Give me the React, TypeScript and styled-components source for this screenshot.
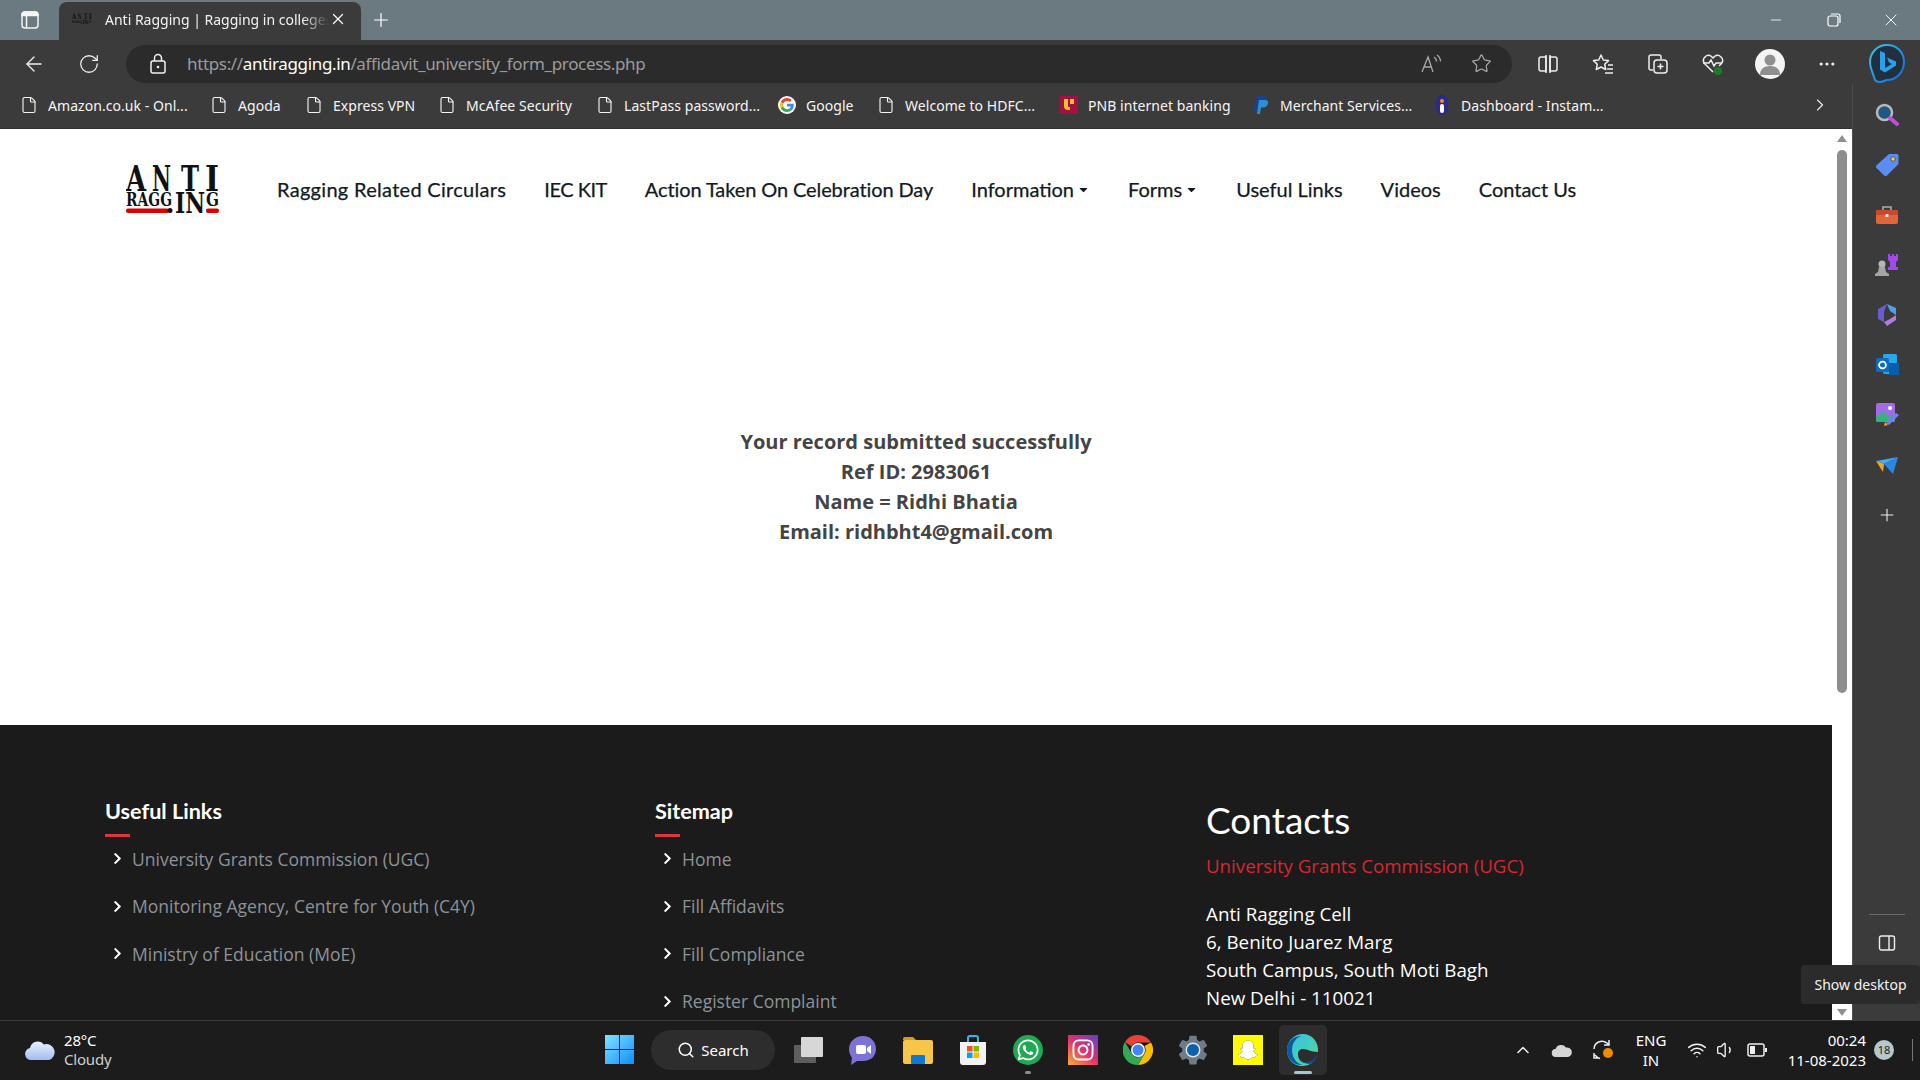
import React from 'react'
import styled, { createGlobalStyle } from 'styled-components'
import {
  ArrowLeft,
  ChevronRight,
  ChevronUp,
  File,
  Minus,
  MoreHorizontal,
  Plus,
  RotateCw,
  Search,
  Star,
  Volume1,
  Wifi,
  X,
} from 'lucide-react'
import { FaSnapchatGhost, FaWhatsapp, FaInstagram, FaCaretDown, FaChevronRight } from 'react-icons/fa'
import { IoSettingsSharp } from 'react-icons/io5'

const GlobalStyle = createGlobalStyle`
  html, body {
    margin: 0;
    padding: 0;
    height: 100%;
    overflow: hidden;
    background: #3b3b3b;
  }
  * {
    box-sizing: border-box;
  }
`

const Screen = styled.div`
  position: relative;
  width: 1920px;
  height: 1080px;
  display: flex;
  flex-direction: column;
  overflow: hidden;
  font-family: 'Open Sans', sans-serif;
`

/* ---- browser chrome ---- */

const TabStrip = styled.div`
  height: 40px;
  flex: none;
  display: flex;
  align-items: flex-end;
  background: #6b7a80;
  color: #fff;
`

const TabPanelButton = styled.div`
  width: 59px;
  height: 40px;
  display: flex;
  align-items: center;
  justify-content: center;
`

const Tab = styled.div`
  width: 302px;
  height: 38px;
  display: flex;
  align-items: center;
  padding: 0 13px 4px 13px;
  background: #3b3b3b;
  border-radius: 8px 8px 0 0;
`

const TabTitle = styled.div`
  margin-left: 13px;
  width: 224px;
  overflow: hidden;
  white-space: nowrap;
  font-size: 14px;
  font-family: 'Noto Sans', sans-serif;
  color: #f2f2f2;
  mask-image: linear-gradient(to right, #000 88%, transparent 100%);
`

const NewTab = styled.div`
  margin-left: 6px;
  width: 28px;
  height: 40px;
  display: flex;
  align-items: center;
  justify-content: center;
`

const WindowControls = styled.div`
  margin-left: auto;
  height: 40px;
  display: flex;
  align-items: center;
`

const WindowButton = styled.div`
  width: 57.5px;
  height: 40px;
  display: flex;
  align-items: center;
  justify-content: center;
`

const Toolbar = styled.div`
  height: 44px;
  flex: none;
  display: flex;
  align-items: center;
  gap: 11px;
  padding: 3px 0 0 12px;
  background: #3b3b3b;
`

const ToolButton = styled.div<{ $dim?: boolean; $nudge?: number }>`
  width: 44px;
  height: 38px;
  flex: none;
  display: flex;
  align-items: center;
  justify-content: center;
  margin-left: ${({ $nudge }) => $nudge ?? 0}px;
  color: ${({ $dim }) => ($dim ? '#a8a8a8' : '#eeeeee')};
`

const Omnibox = styled.div`
  width: 1386px;
  height: 38px;
  flex: none;
  margin: 0 3px 0 4px;
  display: flex;
  align-items: center;
  background: #2b2b2b;
  border-radius: 19px;
  padding-left: 23px;
  color: #f0f0f0;
`

const Url = styled.div`
  margin-left: 20px;
  font-size: 17px;
  font-family: 'Noto Sans', sans-serif;
  color: #9b9b9b;
  flex: 1;
  white-space: nowrap;
  letter-spacing: -0.35px;
  b {
    font-weight: 400;
    color: #fff;
  }
`

const OmniboxActions = styled.div`
  display: flex;
  align-items: center;
  gap: 6px;
  padding-right: 9px;
`

const Avatar = styled.div`
  width: 30px;
  height: 30px;
  border-radius: 50%;
  background: #f4f4f4;
  display: flex;
  align-items: center;
  justify-content: center;
  overflow: hidden;
`

const Body = styled.div`
  flex: 1;
  min-height: 0;
  display: flex;
`

const Content = styled.div`
  width: 1852px;
  flex: none;
  display: flex;
  flex-direction: column;
`

const Bookmarks = styled.div`
  height: 45px;
  flex: none;
  display: flex;
  align-items: center;
  padding: 0 20px 2px;
  background: #3b3b3b;
  border-bottom: 1px solid #2f2f2f;
  color: #f5f5f5;
`

const Bookmark = styled.div<{ $width: number }>`
  width: ${({ $width }) => $width}px;
  flex: none;
  display: flex;
  align-items: center;
  gap: 10px;
`

const BookmarkIcon = styled.span`
  width: 18px;
  height: 20px;
  flex: none;
  display: flex;
  align-items: center;
  justify-content: center;
`

const BookmarkLabel = styled.span`
  font-size: 14px;
  font-family: 'Noto Sans', sans-serif;
  white-space: nowrap;
  letter-spacing: 0.05px;
`

const BookmarkMore = styled.div`
  margin-left: auto;
  width: 24px;
  display: flex;
  justify-content: center;
  color: #e8e8e8;
`

const PageRow = styled.div`
  flex: 1;
  min-height: 0;
  display: flex;
`

const Page = styled.div`
  width: 1832px;
  flex: none;
  display: flex;
  flex-direction: column;
  background: #fff;
  overflow: hidden;
`

const ScrollTrack = styled.div`
  width: 20px;
  flex: none;
  background: #fff;
  display: flex;
  flex-direction: column;
  align-items: center;
  padding-top: 6px;
`

const ScrollThumb = styled.div`
  width: 10px;
  height: 543px;
  margin-top: 8px;
  border-radius: 5px;
  background: #8e8e8e;
`

const ScrollArrow = styled.div<{ $down?: boolean }>`
  width: 0;
  height: 0;
  border-left: 5px solid transparent;
  border-right: 5px solid transparent;
  ${({ $down }) =>
    $down
      ? 'border-top: 7px solid #8f8f8f; margin-top: auto; margin-bottom: 4px;'
      : 'border-bottom: 7px solid #8f8f8f;'}
`

const Sidebar = styled.div`
  width: 68px;
  flex: none;
  display: flex;
  flex-direction: column;
  align-items: center;
  padding-top: 6px;
  background: #3b3b3b;
  border-left: 1px solid #4d4d4d;
  color: #eee;
`

const SideButton = styled.div`
  width: 40px;
  height: 50px;
  flex: none;
  display: flex;
  align-items: center;
  justify-content: center;
  &:last-of-type {
    margin-top: 5px;
  }
`

const SideDivider = styled.div`
  width: 36px;
  height: 1px;
  margin-top: auto;
  background: #6a6a6a;
`

const SideFoot = styled.div`
  height: 105px;
  flex: none;
  padding-top: 19px;
  display: flex;
  justify-content: center;
  color: #eee;
`

/* ---- web page ---- */

const NavBar = styled.nav`
  height: 120px;
  flex: none;
  display: flex;
  align-items: center;
  padding-left: 126px;
`

const NavLinks = styled.div`
  margin-left: 57px;
  display: flex;
  align-items: center;
  gap: 38px;
`

const NavLink = styled.a<{ $tracking?: number }>`
  display: flex;
  align-items: center;
  gap: 3px;
  font-family: 'Lato', sans-serif;
  font-size: 20px;
  letter-spacing: ${({ $tracking }) => $tracking ?? 0}px;
  -webkit-text-stroke: 0.25px #111a22;
  color: #111a22;
  white-space: nowrap;
`

const Message = styled.main`
  height: 476px;
  flex: none;
  padding-top: 178px;
  text-align: center;
  font-size: 20px;
  font-weight: 700;
  line-height: 30px;
  color: #444444;
`

const Footer = styled.footer`
  flex: 1;
  min-height: 0;
  display: grid;
  grid-template-columns: 550px 551px 1fr;
  padding: 69px 0 0 105px;
  background: #1b1b1b;
  overflow: hidden;
`

const FooterTitle = styled.h4`
  margin: 0;
  position: relative;
  font-family: 'Lato', sans-serif;
  font-size: 21.6px;
  font-weight: 700;
  line-height: 34px;
  height: 43px;
  color: #fff;
  &::after {
    content: '';
    position: absolute;
    left: 0;
    bottom: 0;
    width: 25px;
    height: 3px;
    background: #dc3540;
  }
`

const LinkList = styled.ul`
  list-style: none;
  margin: -2px 0 0;
  padding: 0;
`

const LinkItem = styled.li`
  height: 47.5px;
  display: flex;
  align-items: center;
  gap: 8px;
  padding-left: 6px;
  font-size: 17.5px;
  color: #8d9399;
  white-space: nowrap;
  svg {
    color: #fff;
  }
`

const ContactsTitle = styled.h3`
  margin: 1px 0 0;
  height: 50px;
  font-family: 'Lato', sans-serif;
  font-size: 37px;
  font-weight: 400;
  line-height: 50px;
  color: #fff;
`

const ContactOrg = styled.div`
  margin-top: 7px;
  font-size: 18.7px;
  line-height: 28px;
  color: #d8262f;
  white-space: nowrap;
`

const ContactAddress = styled.address`
  margin-top: 20px;
  font-style: normal;
  font-size: 18.8px;
  line-height: 28px;
  color: #fff;
  white-space: nowrap;
`

/* ---- taskbar ---- */

const Taskbar = styled.div`
  height: 60px;
  flex: none;
  display: flex;
  align-items: center;
  padding-bottom: 2px;
  background: #1c1c1c;
  border-top: 1px solid #3a3a3a;
  color: #fff;
`

const Weather = styled.div`
  width: 605px;
  flex: none;
  display: flex;
  align-items: center;
  gap: 8px;
  padding-left: 24px;
`

const WeatherText = styled.div`
  font-size: 15px;
  line-height: 19px;
  font-family: 'Noto Sans', sans-serif;
  letter-spacing: -0.2px;
  span {
    display: block;
    color: #cfcfcf;
  }
`

const TaskIcons = styled.div`
  display: flex;
  align-items: center;
`

const TaskIcon = styled.div<{ $active?: boolean; $pip?: boolean }>`
  position: relative;
  width: 48px;
  height: 50px;
  margin: 0 3.5px;
  flex: none;
  display: flex;
  align-items: center;
  justify-content: center;
  border-radius: 5px;
  background: ${({ $active }) => ($active ? '#2d2d2d' : 'transparent')};
  &::after {
    content: '';
    display: ${({ $active, $pip }) => ($active || $pip ? 'block' : 'none')};
    position: absolute;
    bottom: 1px;
    left: 50%;
    transform: translateX(-50%);
    width: ${({ $active }) => ($active ? '18px' : '6px')};
    height: 3px;
    border-radius: 2px;
    background: ${({ $active }) => ($active ? '#a9c4cf' : '#8c8c8c')};
  }
`

const SearchPill = styled.div`
  width: 124px;
  height: 40px;
  margin: 0 5px 0 17px;
  flex: none;
  display: flex;
  align-items: center;
  justify-content: center;
  gap: 6px;
  border-radius: 20px;
  background: #2d2d2d;
  font-size: 15px;
  font-family: 'Noto Sans', sans-serif;
`

const Tray = styled.div`
  margin-left: auto;
  display: flex;
  align-items: center;
  padding-right: 7px;
`

const TrayIcon = styled.div<{ $width: number }>`
  width: ${({ $width }) => $width}px;
  height: 40px;
  flex: none;
  display: flex;
  align-items: center;
  justify-content: center;
  color: #f2f2f2;
`

const TrayLang = styled.div`
  width: 64px;
  flex: none;
  text-align: center;
  font-size: 15px;
  line-height: 20px;
  font-family: 'Noto Sans', sans-serif;
`

const Clock = styled.div`
  width: 93px;
  flex: none;
  text-align: right;
  font-size: 15px;
  line-height: 20px;
  font-family: 'Noto Sans', sans-serif;
`

const CountBadge = styled.div`
  width: 20px;
  height: 20px;
  margin: 0 18px 0 8px;
  flex: none;
  display: flex;
  align-items: center;
  justify-content: center;
  border-radius: 50%;
  background: #b5c6cc;
  color: #1c1c1c;
  font-size: 11px;
  font-family: 'Noto Sans', sans-serif;
`

const DesktopEdge = styled.div`
  width: 1px;
  height: 22px;
  background: #777;
`

const Tooltip = styled.div`
  position: absolute;
  left: 1801px;
  top: 965px;
  width: 119px;
  height: 39px;
  display: flex;
  align-items: center;
  justify-content: center;
  border-radius: 4px;
  background: #2b2b2b;
  color: #f2f2f2;
  font-size: 14px;
  font-family: 'Noto Sans', sans-serif;
  white-space: nowrap;
`

/* ---- drawings ---- */

const logoLetters = [
  { char: 'A', x: 0, w: 20 },
  { char: 'N', x: 26, w: 19 },
  { char: 'T', x: 55, w: 18 },
  { char: 'I', x: 79, w: 14 },
]

const Logo: React.FC<{ width?: number; height?: number }> = ({ width = 94, height = 52 }) => (
  <svg width={width} height={height} viewBox="0 0 94 52">
    <g fontFamily="'DejaVu Serif', serif" fontWeight="700" fill="#111">
      {logoLetters.map((letter) => (
        <text
          key={letter.char}
          x={letter.x}
          y="28"
          fontSize="36"
          textLength={letter.w}
          lengthAdjust="spacingAndGlyphs"
        >
          {letter.char}
        </text>
      ))}
      <text x="0" y="43" fontSize="18" textLength="46" lengthAdjust="spacingAndGlyphs">
        RAGG
      </text>
      <text x="49" y="50" fontSize="27" textLength="30" lengthAdjust="spacingAndGlyphs">
        IN
      </text>
      <text x="80" y="43" fontSize="18" textLength="13" lengthAdjust="spacingAndGlyphs">
        G
      </text>
    </g>
    <rect x="0" y="45.500" width="43" height="4.500" rx="2" fill="#d90000" />
    <circle cx="44" cy="47.500" r="2.500" fill="#111" />
    <rect x="80" y="45.500" width="13" height="4.500" rx="2" fill="#d90000" />
  </svg>
)

const VerticalTabsIcon = () => (
  <svg width="20" height="20" viewBox="0 0 20 20" fill="none" stroke="#f4f4f4" strokeWidth="1.500">
    <rect x="2" y="2" width="16" height="16" rx="3" />
    <path d="M2 5.500a3 3 0 0 1 3-3.500h10a3 3 0 0 1 3 3.500z" fill="#f4f4f4" />
    <path d="M6.500 5v13" />
  </svg>
)

const LockDot = () => (
  <svg width="18" height="22" viewBox="0 0 18 22" fill="none" stroke="#f0f0f0" strokeWidth="1.500">
    <rect x="2" y="8" width="14" height="12" rx="2" />
    <path d="M5.500 8V5a3.500 3.500 0 0 1 7 0v3" />
    <circle cx="9" cy="14" r="1.300" fill="#f0f0f0" stroke="none" />
  </svg>
)

const SplitIcon = () => (
  <svg width="22" height="24" viewBox="0 0 22 24" fill="none" stroke="#eee" strokeWidth="1.500">
    <path d="M9 5H4a2 2 0 0 0-2 2v10a2 2 0 0 0 2 2h5zM13 5h5a2 2 0 0 1 2 2v10a2 2 0 0 1-2 2h-5z" />
    <path d="M9 3v18M13 3v18" />
  </svg>
)

const GoogleIcon = () => (
  <svg width="20" height="20" viewBox="0 0 48 48">
    <circle cx="24" cy="24" r="24" fill="#fff" />
    <path fill="#EA4335" d="M24 13c3 0 5.400 1 7.300 2.800l5.300-5.300C33.300 7.500 29 5.500 24 5.500 16.800 5.500 10.600 9.600 7.600 15.600l6.200 4.800C15.200 16.100 19.200 13 24 13z" />
    <path fill="#4285F4" d="M42 24.500c0-1.300-.1-2.500-.3-3.700H24v7.100h10.100c-.4 2.300-1.800 4.300-3.800 5.600l6 4.600c3.500-3.200 5.700-8 5.700-13.600z" />
    <path fill="#FBBC05" d="M13.800 27.600c-.4-1.100-.6-2.300-.6-3.600s.2-2.500.6-3.600l-6.200-4.800C6.300 18.100 5.500 21 5.500 24s.8 5.900 2.100 8.400l6.200-4.800z" />
    <path fill="#34A853" d="M24 42.500c5 0 9.200-1.600 12.300-4.500l-6-4.600c-1.700 1.100-3.800 1.800-6.300 1.800-4.800 0-8.800-3.100-10.200-7.600l-6.200 4.800c3 6 9.200 10.100 16.400 10.100z" />
  </svg>
)

const PnbIcon = () => (
  <svg width="18" height="18" viewBox="0 0 18 18">
    <rect width="18" height="18" fill="#a3123f" />
    <path d="M4 3v7a4 4 0 0 0 4 4h2v-3H9a1 1 0 0 1-1-1V3zM10 3v5h4V3z" fill="#f7c02c" />
  </svg>
)

const PaypalIcon = () => (
  <svg width="16" height="20" viewBox="0 0 16 20">
    <path d="M4 1h6c3 0 4.500 1.600 4 4.200C13.400 8.400 11 10 8 10H6l-1 6H1z" fill="#1b3f94" />
    <path d="M6 5h6c2.500 0 3.500 1.400 3 3.500-.6 2.600-2.600 4-5 4H8l-1 6.500H4z" fill="#2a9ad8" opacity="0.9" />
  </svg>
)

const InstamojoIcon = () => (
  <svg width="14" height="20" viewBox="0 0 14 20">
    <ellipse cx="7" cy="10" rx="6.500" ry="10" fill="#2b2a8c" />
    <circle cx="7" cy="6" r="2" fill="#f28c28" />
    <rect x="5" y="9" width="4" height="9" rx="2" fill="#fff" />
  </svg>
)

const ReadAloud = () => (
  <svg width="22" height="22" viewBox="0 0 22 22" fill="none" stroke="#a8a8a8" strokeWidth="1.300">
    <path d="M2 19 8 4l5 15M4.500 14h7" />
    <path d="M14 4c1.500 1 2.500 2.500 2.500 4.500M17 2c2 1.500 3.500 4 3.500 6.500" />
  </svg>
)

const FavoritesIcon = () => (
  <svg width="24" height="24" viewBox="0 0 24 24" fill="none" stroke="#eee" strokeWidth="1.500" strokeLinejoin="round">
    <path d="M10 3l2.300 5 5.200.6-3.800 3.600 1 5.300L10 15l-4.700 2.500 1-5.300L2.500 8.600 7.700 8z" />
    <path d="M17 13h5M16 17h6M14 21h8" />
  </svg>
)

const CollectionsIcon = () => (
  <svg width="24" height="24" viewBox="0 0 24 24" fill="none" stroke="#eee" strokeWidth="1.500">
    <path d="M7 18H5a2 2 0 0 1-2-2V5a2 2 0 0 1 2-2h8a2 2 0 0 1 2 2v2" />
    <rect x="8" y="8" width="13" height="13" rx="3" />
    <path d="M14.500 11.500v6M11.500 14.500h6" />
  </svg>
)

const HealthIcon = () => (
  <svg width="26" height="26" viewBox="0 0 26 26">
    <path
      d="M13 21 4.500 12.500a5 5 0 0 1 7-7L13 7l1.500-1.500a5 5 0 0 1 7 7L19 15"
      fill="none"
      stroke="#eee"
      strokeWidth="1.500"
    />
    <path d="M3 12h6l2-3 3 6 2-3h6" fill="none" stroke="#eee" strokeWidth="1.500" />
    <circle cx="18" cy="20" r="4" fill="#1c7a2a" />
  </svg>
)

const AvatarFigure = () => (
  <svg width="30" height="30" viewBox="0 0 30 30">
    <circle cx="15" cy="11" r="5.500" fill="#8f8f8f" />
    <path d="M5 26c0-6 4-9 10-9s10 3 10 9z" fill="#8f8f8f" />
  </svg>
)

const BingIcon = () => (
  <svg width="38" height="42" viewBox="0 0 38 42">
    <defs>
      <linearGradient id="bingRing" x1="0" y1="0" x2="1" y2="1">
        <stop offset="0" stopColor="#37c8f0" />
        <stop offset="1" stopColor="#1463d8" />
      </linearGradient>
    </defs>
    <path
      d="M19 2C9.500 2 2 9.500 2 19c0 6 3 11 4 15 .5 3 3 5 6 5 4 0 5-2 7-2 9.500 0 17-8 17-18S28.500 2 19 2z"
      fill="#20303c"
      stroke="url(#bingRing)"
      strokeWidth="2"
    />
    <path d="M12 8l5 2v15l7-4-3-1.500-2-5 9 4v4l-11 7-5-3z" fill="#2b9ff0" />
  </svg>
)

const SearchGlass = () => (
  <svg width="24" height="24" viewBox="0 0 24 24">
    <circle cx="9.500" cy="9.500" r="7.500" fill="#20567f" stroke="#b9b9b9" strokeWidth="2.500" />
    <path d="M15 15l7 6" stroke="#c24ddb" strokeWidth="4" strokeLinecap="round" />
  </svg>
)

const TagIcon = () => (
  <svg width="24" height="24" viewBox="0 0 24 24">
    <path d="M14 1h8a1.500 1.500 0 0 1 1.500 1.500V11L12 22.500a2 2 0 0 1-2.800 0L1.500 15a2 2 0 0 1 0-2.800z" fill="#5b8cf5" />
    <circle cx="18" cy="6" r="2.200" fill="#f4d03f" stroke="#333" strokeWidth="0.700" />
  </svg>
)

const ToolboxIcon = () => (
  <svg width="24" height="24" viewBox="0 0 24 24">
    <path d="M8 7V4h8v3" fill="none" stroke="#aaa" strokeWidth="1.600" />
    <rect x="1" y="7" width="22" height="14" rx="2" fill="#e2643a" />
    <rect x="1" y="7" width="22" height="5" fill="#c7482a" />
    <rect x="10.500" y="11" width="3" height="3" fill="#ddd" />
  </svg>
)

const ChessIcon = () => (
  <svg width="24" height="24" viewBox="0 0 24 24">
    <path d="M13 1h2v2h2V1h2v2h2V1h2v6l-2 2v5h2v3H13v-3h2V9l-2-2z" fill="#a04be8" />
    <circle cx="7" cy="11" r="3.500" fill="#b5b5b5" />
    <path d="M4 14h6l1 5 3 2v2H0v-2l3-2z" fill="#a5a5a5" />
  </svg>
)

const CopilotIcon = () => (
  <svg width="24" height="24" viewBox="0 0 24 24">
    <path d="M12 1 21 5v7l-6-4-3-7z" fill="#4aa3e8" />
    <path d="M3 6l9-5-3 8v10L3 16z" fill="#6a5bd0" />
    <path d="M9 19l6-3 6-4v5l-9 6z" fill="#b07ce0" />
  </svg>
)

const OutlookIcon = () => (
  <svg width="24" height="24" viewBox="0 0 24 24">
    <rect x="8" y="1" width="14" height="20" rx="1.500" fill="#28a8ea" />
    <rect x="14" y="10" width="10" height="12" fill="#0a5ea8" />
    <rect x="1" y="5" width="13" height="14" rx="1.500" fill="#0f6cbd" />
    <circle cx="7.500" cy="12" r="3.400" fill="none" stroke="#fff" strokeWidth="1.800" />
  </svg>
)

const ImageIcon = () => (
  <svg width="26" height="26" viewBox="0 0 26 26">
    <rect x="2" y="1" width="19" height="19" rx="2" fill="#a36be8" />
    <path d="M2 15l7-6 6 6 6-3v6a2 2 0 0 1-2 2H4a2 2 0 0 1-2-2z" fill="#35b37e" />
    <circle cx="16" cy="6" r="2" fill="#fff" />
    <path d="M12 21l10-10 3 2-10 10z" fill="#7e7bf0" />
    <path d="M11 20l3 3-4 1z" fill="#f2a81d" />
  </svg>
)

const SendIcon = () => (
  <svg width="24" height="22" viewBox="0 0 24 22">
    <path d="M1 7l22-4-14 7z" fill="#43a8f5" />
    <path d="M23 3 18 20l-9-10z" fill="#2b87e3" />
    <path d="M1 7l8 3-1 8z" fill="#f4a71e" />
  </svg>
)

const PanelRight = () => (
  <svg width="18" height="18" viewBox="0 0 18 18" fill="none" stroke="#eee" strokeWidth="1.400">
    <rect x="1.500" y="2" width="15" height="14" rx="2" />
    <path d="M11 2v14" />
  </svg>
)

const CloudIcon = () => (
  <svg width="32" height="24" viewBox="0 0 32 24">
    <defs>
      <linearGradient id="cloudFill" x1="0" y1="0" x2="0" y2="1">
        <stop offset="0" stopColor="#e8f0ff" />
        <stop offset="1" stopColor="#a3bdf0" />
      </linearGradient>
    </defs>
    <path d="M7 22a6 6 0 0 1-1-11.900A8 8 0 0 1 20 6.500 6.500 6.500 0 0 1 25 22z" fill="url(#cloudFill)" />
  </svg>
)

const WindowsLogo = () => (
  <svg width="29" height="29" viewBox="0 0 29 29">
    <defs>
      <linearGradient id="winFill" x1="0" y1="0" x2="1" y2="1">
        <stop offset="0" stopColor="#7fe3ff" />
        <stop offset="1" stopColor="#0f8fff" />
      </linearGradient>
    </defs>
    <path d="M0 0h14v14H0zM15 0h14v14H15zM0 15h14v14H0zM15 15h14v14H15z" fill="url(#winFill)" />
  </svg>
)

const TaskViewIcon = () => (
  <svg width="30" height="28" viewBox="0 0 30 28">
    <rect x="1" y="9" width="22" height="18" rx="1" fill="#5e5e5e" />
    <rect x="8" y="1" width="22" height="20" rx="1" fill="#d7d7d7" />
  </svg>
)

const TeamsIcon = () => (
  <svg width="30" height="30" viewBox="0 0 30 30">
    <path d="M15 1c8 0 13 6 13 13s-5 12-13 12H9l-6 4 1-7C2 20 1 17 1 14 1 7 7 1 15 1z" fill="#7b74d6" />
    <rect x="8" y="10" width="10" height="9" rx="2" fill="#fff" />
    <path d="M19 13l4-3v9l-4-3z" fill="#fff" />
  </svg>
)

const FolderIcon = () => (
  <svg width="30" height="28" viewBox="0 0 30 28">
    <path d="M0 3a2 2 0 0 1 2-2h8l3 3h-13z" fill="#d99a1c" />
    <rect x="0" y="4" width="30" height="24" rx="2" fill="#f7c548" />
    <rect x="8" y="19" width="14" height="9" rx="1" fill="#0f78d4" />
  </svg>
)

const StoreIcon = () => (
  <svg width="28" height="30" viewBox="0 0 28 30">
    <path d="M9 7V3a2 2 0 0 1 2-2h6a2 2 0 0 1 2 2v4" fill="none" stroke="#35b6e8" strokeWidth="2" />
    <path d="M1 7h26v20a3 3 0 0 1-3 3H4a3 3 0 0 1-3-3z" fill="#f2f2f2" />
    <rect x="8" y="11" width="5.500" height="5.500" fill="#f25022" />
    <rect x="14.500" y="11" width="5.500" height="5.500" fill="#7fba00" />
    <rect x="8" y="17.500" width="5.500" height="5.500" fill="#00a4ef" />
    <rect x="14.500" y="17.500" width="5.500" height="5.500" fill="#ffb900" />
  </svg>
)

const ChromeIcon = () => (
  <svg width="30" height="30" viewBox="0 0 30 30">
    <path d="M15 0a15 15 0 0 1 13 7.500H15a7.500 7.500 0 0 0-6.500 3.750L2 7A15 15 0 0 1 15 0z" fill="#ea4335" />
    <path d="M28 7.500A15 15 0 0 1 15 30l6.500-11.250A7.500 7.500 0 0 0 21.500 11z" fill="#fbbc05" />
    <path d="M15 30A15 15 0 0 1 2 7l6.500 11.250A7.500 7.500 0 0 0 15 22.500l6.500-3.750z" fill="#34a853" />
    <circle cx="15" cy="15" r="7" fill="#fff" />
    <circle cx="15" cy="15" r="5.500" fill="#4285f4" />
  </svg>
)

const SnapTile = styled.div`
  width: 30px;
  height: 30px;
  display: flex;
  align-items: center;
  justify-content: center;
  background: #fffc00;
  color: #fff;
  svg {
    filter: drop-shadow(0 0 0.7px #000);
  }
`

const InstaTile = styled.div`
  width: 30px;
  height: 30px;
  display: flex;
  align-items: center;
  justify-content: center;
  color: #fff;
  background: linear-gradient(40deg, #f9a13a 5%, #e1306c 50%, #6a3fc8 95%);
`

const WhatsappTile = styled.div`
  width: 30px;
  height: 30px;
  display: flex;
  align-items: center;
  justify-content: center;
  border-radius: 50%;
  background: #1ea952;
  color: #fff;
`

const SettingsTile = styled.div`
  position: relative;
  display: flex;
  color: #6f7b85;
  &::after {
    content: '';
    position: absolute;
    inset: 10px;
    border-radius: 50%;
    background: #0c5fa8;
    box-shadow: 0 0 0 1.5px #dfe6ea;
  }
`

const EdgeIcon = () => (
  <svg width="32" height="32" viewBox="0 0 32 32">
    <defs>
      <linearGradient id="edgeTop" x1="0" y1="0" x2="1" y2="1">
        <stop offset="0" stopColor="#35c1f1" />
        <stop offset="1" stopColor="#54d88a" />
      </linearGradient>
    </defs>
    <path d="M16 0C7 0 0 7 0 16c0 9 6 16 15 16 4 0 7-1 10-3-8 2-14-2-14-9 0-3 2-5 5-5 5 0 7 3 15 3C32 8 25 0 16 0z" fill="url(#edgeTop)" />
    <path d="M0 16C0 7 7 2 14 2 9 4 5 9 5 16c0 8 5 14 11 15C7 32 0 25 0 16z" fill="#0c59a4" />
    <path d="M31 19c-2 5-7 9-12 9-4 0-8-4-8-8 0 7 6 11 14 9 3-2 5-6 6-10z" fill="#114a8b" />
  </svg>
)

const SyncIcon = () => (
  <svg width="26" height="26" viewBox="0 0 26 26">
    <path d="M4 12a8 8 0 0 1 13-6l2 2M19 3v5h-5" fill="none" stroke="#eee" strokeWidth="1.500" />
    <path d="M4 16v5h5M5 18l2 2a8 8 0 0 0 3 1.500" fill="none" stroke="#eee" strokeWidth="1.500" />
    <circle cx="18" cy="16" r="5" fill="#f08a00" />
  </svg>
)

const TrayCloud = () => (
  <svg width="22" height="16" viewBox="0 0 22 16">
    <path d="M5 15a4 4 0 0 1-.5-8A6 6 0 0 1 15 5.500 4.800 4.800 0 0 1 17 15z" fill="#d6d6d6" />
  </svg>
)

const BatteryIcon = () => (
  <svg width="20" height="14" viewBox="0 0 20 14">
    <rect x="1" y="1" width="16" height="12" rx="2" fill="none" stroke="#eee" strokeWidth="1.500" />
    <rect x="3" y="3" width="5" height="8" fill="#eee" />
    <rect x="18" y="5" width="2" height="4" fill="#eee" />
  </svg>
)

const PageIcon = () => <File size={20} strokeWidth={1.5} />

const bookmarks = [
  { label: 'Amazon.co.uk - Onl...', width: 190, icon: <PageIcon /> },
  { label: 'Agoda', width: 95, icon: <PageIcon /> },
  { label: 'Express VPN', width: 133, icon: <PageIcon /> },
  { label: 'McAfee Security', width: 158, icon: <PageIcon /> },
  { label: 'LastPass password...', width: 182, icon: <PageIcon /> },
  { label: 'Google', width: 99, icon: <GoogleIcon /> },
  { label: 'Welcome to HDFC...', width: 183, icon: <PageIcon /> },
  { label: 'PNB internet banking', width: 192, icon: <PnbIcon /> },
  { label: 'Merchant Services...', width: 181, icon: <PaypalIcon /> },
  { label: 'Dashboard - Instam...', width: 170, icon: <InstamojoIcon /> },
]

const usefulLinks = [
  'University Grants Commission (UGC)',
  'Monitoring Agency, Centre for Youth (C4Y)',
  'Ministry of Education (MoE)',
]

const sitemap = ['Home', 'Fill Affidavits', 'Fill Compliance', 'Register Complaint']

const sideTools = [
  <SearchGlass key="search" />,
  <TagIcon key="tag" />,
  <ToolboxIcon key="tools" />,
  <ChessIcon key="games" />,
  <CopilotIcon key="m365" />,
  <OutlookIcon key="outlook" />,
  <ImageIcon key="image" />,
  <SendIcon key="send" />,
  <Plus key="add" size={20} strokeWidth={1.3} />,
]

const App: React.FC = () => {
  return (
    <Screen>
      <GlobalStyle />
      <TabStrip>
        <TabPanelButton>
          <VerticalTabsIcon />
        </TabPanelButton>
        <Tab>
          <Logo width={20} height={20} />
          <TabTitle>Anti Ragging | Ragging in colleges</TabTitle>
          <X size={18} strokeWidth={1.6} />
        </Tab>
        <NewTab>
          <Plus size={22} strokeWidth={1.3} />
        </NewTab>
        <WindowControls>
          <WindowButton>
            <Minus size={16} strokeWidth={1.2} />
          </WindowButton>
          <WindowButton>
            <svg width="14" height="14" viewBox="0 0 14 14" fill="none" stroke="#fff" strokeWidth="1.200">
              <rect x="1" y="3" width="10" height="10" rx="2" />
              <path d="M4 1h7a2 2 0 0 1 2 2v7" />
            </svg>
          </WindowButton>
          <WindowButton>
            <X size={20} strokeWidth={1.1} />
          </WindowButton>
        </WindowControls>
      </TabStrip>

      <Toolbar>
        <ToolButton>
          <ArrowLeft size={24} strokeWidth={1.4} />
        </ToolButton>
        <ToolButton>
          <RotateCw size={22} strokeWidth={1.4} />
        </ToolButton>
        <Omnibox>
          <LockDot />
          <Url>
            https://<b>antiragging.in</b>/affidavit_university_form_process.php
          </Url>
          <OmniboxActions>
            <ToolButton $dim>
              <ReadAloud />
            </ToolButton>
            <ToolButton $dim>
              <Star size={21} strokeWidth={1.4} />
            </ToolButton>
          </OmniboxActions>
        </Omnibox>
        <ToolButton>
          <SplitIcon />
        </ToolButton>
        <ToolButton>
          <FavoritesIcon />
        </ToolButton>
        <ToolButton>
          <CollectionsIcon />
        </ToolButton>
        <ToolButton>
          <HealthIcon />
        </ToolButton>
        <ToolButton $nudge={2}>
          <Avatar>
            <AvatarFigure />
          </Avatar>
        </ToolButton>
        <ToolButton $nudge={2}>
          <MoreHorizontal size={20} strokeWidth={1.8} />
        </ToolButton>
        <ToolButton $nudge={5}>
          <BingIcon />
        </ToolButton>
      </Toolbar>

      <Body>
        <Content>
          <Bookmarks>
            {bookmarks.map((item) => (
              <Bookmark key={item.label} $width={item.width}>
                <BookmarkIcon>{item.icon}</BookmarkIcon>
                <BookmarkLabel>{item.label}</BookmarkLabel>
              </Bookmark>
            ))}
            <BookmarkMore>
              <ChevronRight size={20} strokeWidth={1.4} />
            </BookmarkMore>
          </Bookmarks>
          <PageRow>
            <Page>
              <NavBar>
                <Logo />
                <NavLinks>
                  <NavLink $tracking={0.3}>Ragging Related Circulars</NavLink>
                  <NavLink $tracking={-0.5}>IEC KIT</NavLink>
                  <NavLink $tracking={-0.1}>Action Taken On Celebration Day</NavLink>
                  <NavLink>
                    Information <FaCaretDown size={13} />
                  </NavLink>
                  <NavLink>
                    Forms <FaCaretDown size={13} />
                  </NavLink>
                  <NavLink>Useful Links</NavLink>
                  <NavLink>Videos</NavLink>
                  <NavLink>Contact Us</NavLink>
                </NavLinks>
              </NavBar>
              <Message>
                Your record submitted successfully
                <br />
                Ref ID: 2983061
                <br />
                Name = Ridhi Bhatia
                <br />
                Email: ridhbht4@gmail.com
              </Message>
              <Footer>
                <div>
                  <FooterTitle>Useful Links</FooterTitle>
                  <LinkList>
                    {usefulLinks.map((link) => (
                      <LinkItem key={link}>
                        <FaChevronRight size={13} />
                        {link}
                      </LinkItem>
                    ))}
                  </LinkList>
                </div>
                <div>
                  <FooterTitle>Sitemap</FooterTitle>
                  <LinkList>
                    {sitemap.map((link) => (
                      <LinkItem key={link}>
                        <FaChevronRight size={13} />
                        {link}
                      </LinkItem>
                    ))}
                  </LinkList>
                </div>
                <div>
                  <ContactsTitle>Contacts</ContactsTitle>
                  <ContactOrg>University Grants Commission (UGC)</ContactOrg>
                  <ContactAddress>
                    Anti Ragging Cell
                    <br />
                    6, Benito Juarez Marg
                    <br />
                    South Campus, South Moti Bagh
                    <br />
                    New Delhi - 110021
                  </ContactAddress>
                </div>
              </Footer>
            </Page>
            <ScrollTrack>
              <ScrollArrow />
              <ScrollThumb />
              <ScrollArrow $down />
            </ScrollTrack>
          </PageRow>
        </Content>
        <Sidebar>
          {sideTools.map((tool) => (
            <SideButton key={tool.key}>{tool}</SideButton>
          ))}
          <SideDivider />
          <SideFoot>
            <PanelRight />
          </SideFoot>
        </Sidebar>
      </Body>

      <Taskbar>
        <Weather>
          <CloudIcon />
          <WeatherText>
            28°C
            <span>Cloudy</span>
          </WeatherText>
        </Weather>
        <TaskIcons>
          <WindowsLogo />
          <SearchPill>
            <Search size={18} strokeWidth={2} />
            Search
          </SearchPill>
          <TaskIcon>
            <TaskViewIcon />
          </TaskIcon>
          <TaskIcon>
            <TeamsIcon />
          </TaskIcon>
          <TaskIcon>
            <FolderIcon />
          </TaskIcon>
          <TaskIcon>
            <StoreIcon />
          </TaskIcon>
          <TaskIcon $pip>
            <WhatsappTile>
              <FaWhatsapp size={24} />
            </WhatsappTile>
          </TaskIcon>
          <TaskIcon>
            <InstaTile>
              <FaInstagram size={24} />
            </InstaTile>
          </TaskIcon>
          <TaskIcon>
            <ChromeIcon />
          </TaskIcon>
          <TaskIcon>
            <SettingsTile>
              <IoSettingsSharp size={32} />
            </SettingsTile>
          </TaskIcon>
          <TaskIcon>
            <SnapTile>
              <FaSnapchatGhost size={20} />
            </SnapTile>
          </TaskIcon>
          <TaskIcon $active>
            <EdgeIcon />
          </TaskIcon>
        </TaskIcons>
        <Tray>
          <TrayIcon $width={28}>
            <ChevronUp size={20} strokeWidth={1.8} />
          </TrayIcon>
          <TrayIcon $width={50}>
            <TrayCloud />
          </TrayIcon>
          <TrayIcon $width={32}>
            <SyncIcon />
          </TrayIcon>
          <TrayLang>
            ENG
            <br />
            IN
          </TrayLang>
          <TrayIcon $width={28}>
            <Wifi size={20} strokeWidth={1.8} />
          </TrayIcon>
          <TrayIcon $width={30}>
            <Volume1 size={20} strokeWidth={1.6} />
          </TrayIcon>
          <TrayIcon $width={32}>
            <BatteryIcon />
          </TrayIcon>
          <Clock>
            00:24
            <br />
            11-08-2023
          </Clock>
          <CountBadge>18</CountBadge>
          <DesktopEdge />
        </Tray>
      </Taskbar>
      <Tooltip>Show desktop</Tooltip>
    </Screen>
  )
}

export default App
